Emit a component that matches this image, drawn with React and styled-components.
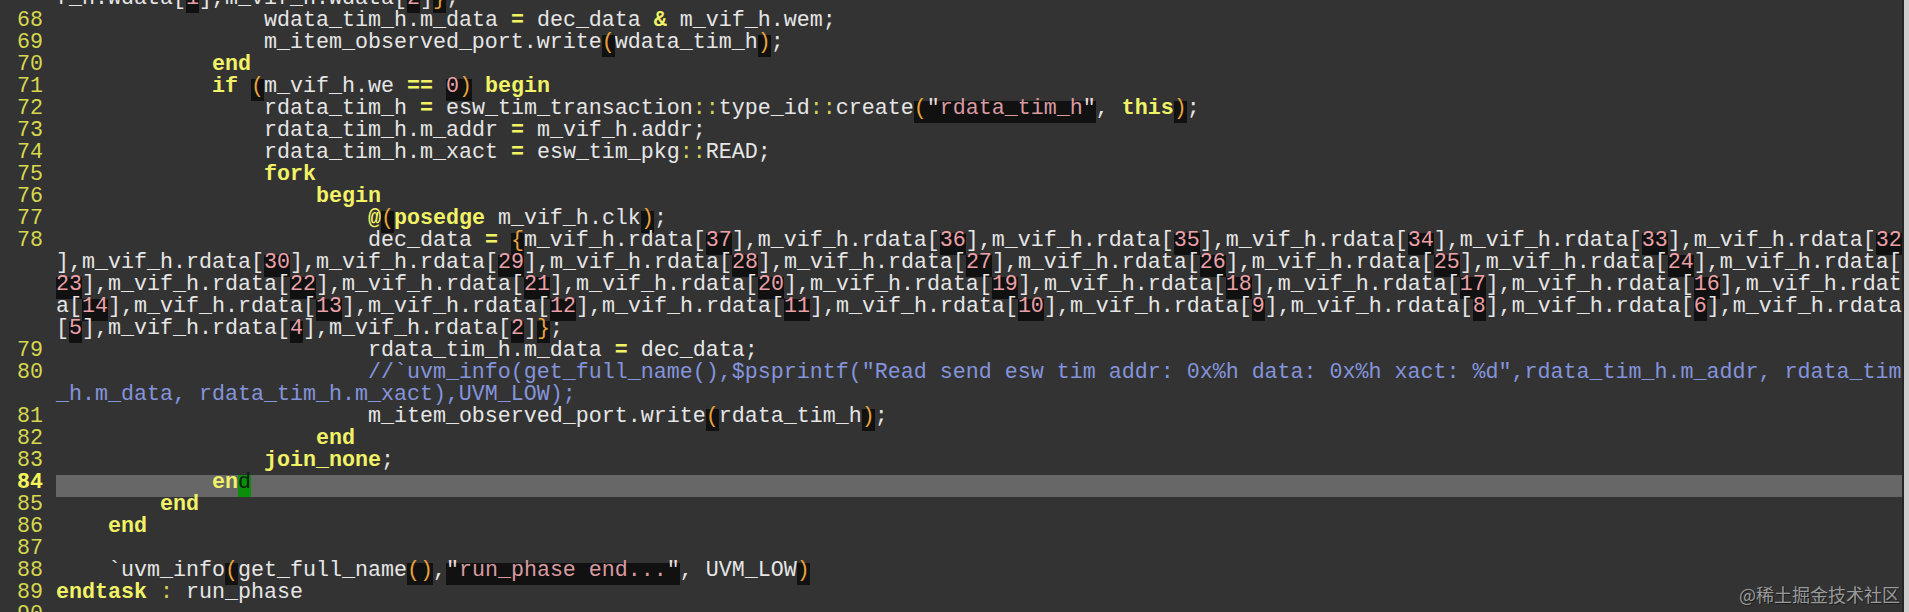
import styled, { createGlobalStyle } from "styled-components";

const GlobalStyle = createGlobalStyle`
  html, body {
    margin: 0;
    padding: 0;
    background: #333333;
    overflow: hidden;
  }
`;

const Screen = styled.div`
  position: relative;
  display: flex;
  width: 1909px;
  height: 612px;
  overflow: hidden;
  background: #333333;
  font-family: "Liberation Mono", "DejaVu Sans Mono", monospace;
  font-size: 21.667px;
`;

const Editor = styled.div`
  width: 1902px;
  flex: none;
  overflow: hidden;
`;

const Lines = styled.div`
  display: flex;
  flex-direction: column;
  margin-top: -9px;
`;

const Row = styled.div`
  display: flex;
  flex: none;
  height: 22px;
`;

const Gutter = styled.div`
  width: 56px;
  flex: none;
  box-sizing: border-box;
  padding-right: 13px;
  text-align: right;
  line-height: 15.5px;
  color: ${({ $current }) => ($current ? "#f6f65c" : "#d8d84e")};
  font-weight: ${({ $current }) => ($current ? 700 : 400)};
`;

const Code = styled.div`
  flex: 1;
  display: flex;
  background: ${({ $current }) => ($current ? "#676767" : "transparent")};
`;

const palette = {
  plain: { fg: "#e6e6e6" },
  kw: { fg: "#f2f266", bold: true },
  op: { fg: "#f2f266", bold: true },
  colon: { fg: "#d4d45c" },
  brace: { fg: "#e8a33c", bg: "#111111" },
  num: { fg: "#eaa0a6", bg: "#111111" },
  str: { fg: "#d99aa0", bg: "#111111" },
  quote: { fg: "#eedcdc", bg: "#111111" },
  comment: { fg: "#8494dc" },
  cursor: { fg: "#0c200c", bg: "#0a8f0a" },
};

const Tok = styled.span`
  white-space: pre;
  height: 22px;
  line-height: 15.5px;
  color: ${({ $kind }) => palette[$kind].fg};
  background: ${({ $kind }) => palette[$kind].bg || "transparent"};
  font-weight: ${({ $kind }) => (palette[$kind].bold ? 700 : 400)};
`;

const ScrollEdge = styled.div`
  flex: 1;
  border-left: 2px solid #262626;
  background: #cdcdcd;
`;

const Watermark = styled.div`
  position: absolute;
  right: 9px;
  bottom: 8px;
  font-family: "Noto Sans CJK SC", "Noto Sans", sans-serif;
  font-size: 18px;
  line-height: 20px;
  color: #9a9a9a;
  text-shadow: 1px 1px 0 #1c1c1c;
`;

const KEYWORDS = new Set(["begin", "end", "if", "fork", "join_none", "this", "posedge", "endtask"]);
const TOKEN = /(\/\/.*)|("[^"]*")|([`$A-Za-z_][\w$]*)|(\d+)|(::?)|(==?|&|@)|([(){}])|(\s+)|([^])/g;

function lex(src, comment) {
  if (comment) return [[src, "comment"]];
  const out = [];
  for (const m of src.matchAll(TOKEN)) {
    const [t, com, str, id, num, col, op, br] = m;
    if (com) out.push([t, "comment"]);
    else if (str) out.push(['"', "quote"], [t.slice(1, -1), "str"], ['"', "quote"]);
    else if (id) out.push([t, KEYWORDS.has(t) ? "kw" : "plain"]);
    else if (num) out.push([t, "num"]);
    else if (col) out.push([t, "colon"]);
    else if (op) out.push([t, "op"]);
    else if (br) out.push([t, "brace"]);
    else out.push([t, "plain"]);
  }
  return out;
}

const pad = (n) => " ".repeat(n);

const ROWS = [
  { text: "f_h.wdata[1],m_vif_h.wdata[2]};" },
  { n: 68, text: pad(16) + "wdata_tim_h.m_data = dec_data & m_vif_h.wem;" },
  { n: 69, text: pad(16) + "m_item_observed_port.write(wdata_tim_h);" },
  { n: 70, text: pad(12) + "end" },
  { n: 71, text: pad(12) + "if (m_vif_h.we == 0) begin" },
  { n: 72, text: pad(16) + 'rdata_tim_h = esw_tim_transaction::type_id::create("rdata_tim_h", this);' },
  { n: 73, text: pad(16) + "rdata_tim_h.m_addr = m_vif_h.addr;" },
  { n: 74, text: pad(16) + "rdata_tim_h.m_xact = esw_tim_pkg::READ;" },
  { n: 75, text: pad(16) + "fork" },
  { n: 76, text: pad(20) + "begin" },
  { n: 77, text: pad(24) + "@(posedge m_vif_h.clk);" },
  {
    n: 78,
    text:
      pad(24) +
      "dec_data = {m_vif_h.rdata[37],m_vif_h.rdata[36],m_vif_h.rdata[35],m_vif_h.rdata[34],m_vif_h.rdata[33],m_vif_h.rdata[32",
  },
  { text: "],m_vif_h.rdata[30],m_vif_h.rdata[29],m_vif_h.rdata[28],m_vif_h.rdata[27],m_vif_h.rdata[26],m_vif_h.rdata[25],m_vif_h.rdata[24],m_vif_h.rdata[" },
  { text: "23],m_vif_h.rdata[22],m_vif_h.rdata[21],m_vif_h.rdata[20],m_vif_h.rdata[19],m_vif_h.rdata[18],m_vif_h.rdata[17],m_vif_h.rdata[16],m_vif_h.rdat" },
  { text: "a[14],m_vif_h.rdata[13],m_vif_h.rdata[12],m_vif_h.rdata[11],m_vif_h.rdata[10],m_vif_h.rdata[9],m_vif_h.rdata[8],m_vif_h.rdata[6],m_vif_h.rdata" },
  { text: "[5],m_vif_h.rdata[4],m_vif_h.rdata[2]};" },
  { n: 79, text: pad(24) + "rdata_tim_h.m_data = dec_data;" },
  {
    n: 80,
    text:
      pad(24) +
      '//`uvm_info(get_full_name(),$psprintf("Read send esw tim addr: 0x%h data: 0x%h xact: %d",rdata_tim_h.m_addr, rdata_tim',
  },
  { text: "_h.m_data, rdata_tim_h.m_xact),UVM_LOW);", comment: true },
  { n: 81, text: pad(24) + "m_item_observed_port.write(rdata_tim_h);" },
  { n: 82, text: pad(20) + "end" },
  { n: 83, text: pad(16) + "join_none;" },
  {
    n: 84,
    cur: true,
    tokens: [
      [pad(12), "plain"],
      ["en", "kw"],
      ["d", "cursor"],
    ],
  },
  { n: 85, text: pad(8) + "end" },
  { n: 86, text: pad(4) + "end" },
  { n: 87, text: "" },
  { n: 88, text: pad(4) + '`uvm_info(get_full_name(),"run_phase end...", UVM_LOW)' },
  { n: 89, text: "endtask : run_phase" },
  { n: 90, text: "" },
];

function App() {
  return (
    <>
      <GlobalStyle />
      <Screen>
        <Editor>
          <Lines>
            {ROWS.map((row, i) => (
              <Row key={i}>
                <Gutter $current={row.cur}>{row.n ?? ""}</Gutter>
                <Code $current={row.cur}>
                  {(row.tokens ?? lex(row.text, row.comment)).map(([t, k], j) => (
                    <Tok key={j} $kind={k}>
                      {t}
                    </Tok>
                  ))}
                </Code>
              </Row>
            ))}
          </Lines>
        </Editor>
        <ScrollEdge />
        <Watermark>@稀土掘金技术社区</Watermark>
      </Screen>
    </>
  );
}

export default App;
